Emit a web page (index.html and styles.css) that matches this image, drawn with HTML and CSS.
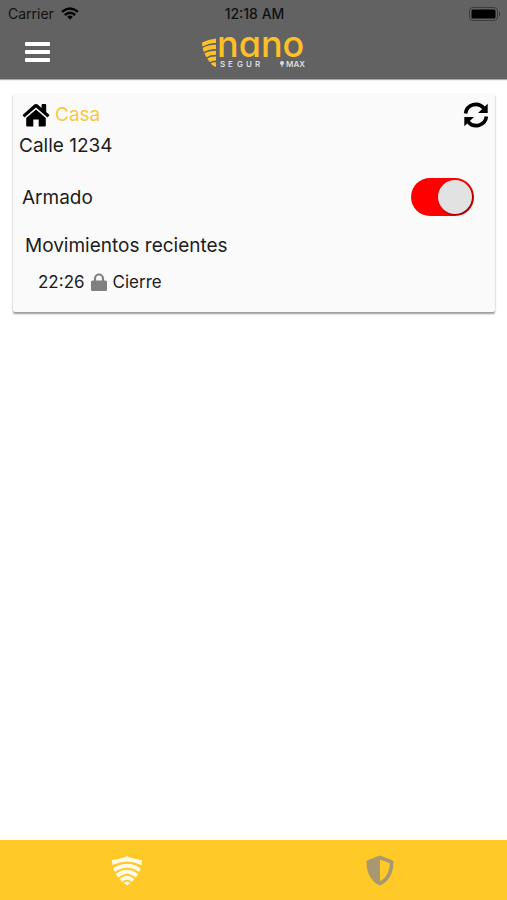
FILE: index.html
```html
<!DOCTYPE html>
<html lang="es">
<head>
  <meta charset="utf-8">
  <meta name="viewport" content="width=device-width, initial-scale=1.0">
  <title>Nano Segur</title>
  <link rel="stylesheet" href="styles.css">
</head>
<body>
  <header class="header">
    <div class="status-bar">
      <div class="carrier">
        <span>Carrier</span>
        <svg width="18" height="13" viewBox="0 0 18 13" fill="none" stroke="#000" stroke-width="2.4">
          <path d="M1 4.8 Q9 -2 17 4.8"/>
          <path d="M3.8 8 Q9 3.6 14.2 8"/>
          <path d="M6.2 9.7 Q9 7.4 11.8 9.7 L9 12.8 Z" fill="#000" stroke="none"/>
        </svg>
      </div>
      <span class="clock">12:18 AM</span>
      <svg class="battery" width="32" height="14" viewBox="0 0 32 14">
        <rect x="0.5" y="0.5" width="28" height="13" rx="3.5" fill="none" stroke="#3c3c3c"/>
        <rect x="2.5" y="2.5" width="24" height="9" rx="1.5"/>
        <path d="M30 4.5 Q32 7 30 9.5 Z" fill="#333"/>
      </svg>
    </div>
    <nav class="nav-bar">
      <button class="menu-button" aria-label="Menú">
        <svg width="25" height="20" viewBox="0 0 25 20" fill="#fff">
          <rect width="25" height="4" rx="1"/>
          <rect y="8" width="25" height="4" rx="1"/>
          <rect y="16" width="25" height="4" rx="1"/>
        </svg>
      </button>
      <svg class="logo" width="106" height="36" viewBox="0 0 106 36">
        <g fill="#fdc029">
          <path d="M1 8.5 Q7 5.5 15 4.5 V9 Q7 9.4 1.4 12.6 Z"/>
          <path d="M1.6 14 Q7 10.8 15 10.8 V15 Q8 15 2.8 18 Z"/>
          <path d="M3.4 19.4 Q8 16.8 15 16.8 V20.8 Q9 20.8 5.4 23.2 Z"/>
          <path d="M6.2 24.6 Q9.5 22.4 15 22.6 V26.6 Q11 26.4 8.8 28.2 Z"/>
          <path d="M9.8 29.4 Q11.5 28 15 28.4 V33 Q11.5 31.8 9.8 29.4 Z"/>
        </g>
        <text class="logo-name" x="16" y="23">nano</text>
        <text class="logo-sub" y="33" x="19 27 36 45 54">SEGUR</text>
        <circle cx="81" cy="29" r="2" fill="#ddd"/>
        <path d="M81 30 V33" stroke="#ddd"/>
        <text class="logo-sub" x="85" y="33">MAX</text>
      </svg>
    </nav>
  </header>

  <main class="content">
    <section class="card">
      <div class="card-title">
        <svg width="28" height="24" viewBox="0 0 28 24">
          <path d="M0.6 12 L12.3 1.6 Q14 0.2 15.7 1.6 L19.6 5 V2 Q19.6 1 20.6 1 H23.2 Q24.2 1 24.2 2 V9 L27.5 12 L26 14 Q25.5 14.4 25 14 L14 4.6 L3 14 Q2.5 14.4 2 14 Z"/>
          <path d="M14 6.5 L23.8 15 V22.5 Q23.8 23.5 22.8 23.5 H16.7 V16.5 H11.3 V23.5 H5.2 Q4.2 23.5 4.2 22.5 V15 Z"/>
        </svg>
        <h1>Casa</h1>
        <button class="refresh-button" aria-label="Actualizar">
          <svg width="26" height="26" viewBox="0 0 26 26">
            <path d="M2.6 11.5 A10.3 10.3 0 0 1 20.8 6.2" fill="none" stroke="#000" stroke-width="3.6"/>
            <path d="M24.7 1.8 V11 H15 Z"/>
            <path d="M23.4 14.5 A10.3 10.3 0 0 1 5.2 19.8" fill="none" stroke="#000" stroke-width="3.6"/>
            <path d="M1.3 24.2 V15 H11 Z"/>
          </svg>
        </button>
      </div>
      <p class="address">Calle 1234</p>
      <div class="armed-row">
        <label for="armed">Armado</label>
        <input type="checkbox" class="toggle" id="armed" checked>
      </div>
      <h2>Movimientos recientes</h2>
      <ul class="movements">
        <li>
          <span>22:26</span>
          <svg width="16" height="18" viewBox="0 0 16 18">
            <path d="M4 8 V5.5 A4 4 0 0 1 12 5.5 V8" fill="none" stroke="#808080" stroke-width="2.2"/>
            <rect y="7.5" width="16" height="10.5" rx="1.6" fill="#808080"/>
          </svg>
          <span>Cierre</span>
        </li>
      </ul>
    </section>
  </main>

  <footer class="tab-bar">
    <button class="tab" aria-label="Sensores">
      <svg width="32" height="32" viewBox="0 0 32 32" fill="#fffbe8">
        <path d="M1 6 Q10 5 16 2 Q22 5 31 6 L30.5 11 Q16 4 1.5 11 Z"/>
        <path d="M2.2 14 Q16 5.5 29.8 14 L28.2 18 Q16 9.5 3.8 18 Z"/>
        <path d="M4.8 20 Q16 11.5 27.2 20 L24.8 23.4 Q16 16 7.2 23.4 Z"/>
        <path d="M8.6 25.2 Q16 18.5 23.4 25.2 L20.6 28 Q16 23.5 11.4 28 Z"/>
        <path d="M12.6 29 Q16 26 19.4 29 L16 31.6 Z"/>
      </svg>
    </button>
    <button class="tab" aria-label="Seguridad">
      <svg width="28" height="31" viewBox="0 0 28 31">
        <path fill="#a89872" fill-rule="evenodd" d="M14 0.5 L26.3 5.3 Q27.5 5.8 27.5 7.2 C27.5 18 22.5 27 14 30.5 C5.5 27 0.5 18 0.5 7.2 Q0.5 5.8 1.7 5.3 Z M14 4.6 V26.3 C20 23.2 23.6 16.5 23.8 8.3 Z"/>
      </svg>
    </button>
  </footer>
</body>
</html>
```
FILE: styles.css
```css
* {
  box-sizing: border-box;
}

body {
  display: flex;
  flex-direction: column;
  min-height: 100vh;
  margin: 0;
  font-family: Inter, "Liberation Sans", sans-serif;
  color: #1c1c1c;
  background-color: #fff;
}

button {
  display: flex;
  padding: 0;
  border: none;
  background: none;
  cursor: pointer;
}

h1, h2, p, ul {
  margin: 0;
  padding: 0;
  font-size: 19px;
  font-weight: 400;
  line-height: 24px;
}

/* Header */
.header {
  height: 79px;
  background-color: #626262;
  box-shadow: 0 1px 1px #aaa;
}

.status-bar, .nav-bar {
  display: grid;
  grid-template-columns: 1fr auto 1fr;
  align-items: center;
}

.status-bar {
  height: 27px;
  padding: 0 6px 0 8px;
  font-size: 14px;
  color: #111;
}

.carrier {
  display: flex;
  align-items: center;
  gap: 7px;
}

.clock {
  font-weight: 500;
}

.battery {
  justify-self: end;
}

.nav-bar {
  height: 50px;
  padding: 0 24px 0 25px;
}

.logo {
  overflow: visible;
}

.logo-name {
  font-size: 36px;
  font-weight: 500;
  font-feature-settings: "cv11";
  fill: #fdc029;
}

.logo-sub {
  font-size: 8px;
  font-weight: 600;
  fill: #ddd;
}

/* Card */
.content {
  flex: 1;
  padding: 14px 12px 14px 13px;
}

.card {
  padding: 8px 6px 18px;
  background-color: #fafafa;
  border-radius: 2px;
  box-shadow: 0 2px 2px rgba(0, 0, 0, 0.4);
}

.card-title {
  display: flex;
  align-items: center;
  gap: 5px;
  height: 28px;
  padding-left: 3px;
}

.card-title h1 {
  color: #f8c93c;
}

.refresh-button {
  margin-left: auto;
}

.address {
  padding: 5px 0;
}

.armed-row {
  display: flex;
  align-items: center;
  justify-content: space-between;
  padding: 15px 15px 18px 3px;
  font-size: 19px;
}

/* Red switch */
.toggle {
  appearance: none;
  display: flex;
  justify-content: flex-end;
  width: 63px;
  height: 38px;
  margin: 0;
  padding: 2px;
  border-radius: 19px;
  background-color: red;
  cursor: pointer;
}

.toggle::before {
  content: "";
  width: 34px;
  height: 34px;
  border-radius: 50%;
  background-color: #e2e2e2;
  box-shadow: 1px 1px 2px rgba(0, 0, 0, 0.5);
}

.toggle:not(:checked) {
  justify-content: flex-start;
  background-color: #bbb;
}

.card h2 {
  padding-left: 6px;
}

.movements {
  padding: 12px 19px 0;
  list-style: none;
}

.movements li {
  display: flex;
  align-items: center;
  gap: 6px;
  font-size: 17px;
}

/* Bottom tabs */
.tab-bar {
  display: flex;
  height: 60px;
  background-color: #ffc928;
}

.tab {
  flex: 1;
  align-items: center;
  justify-content: center;
}
```
